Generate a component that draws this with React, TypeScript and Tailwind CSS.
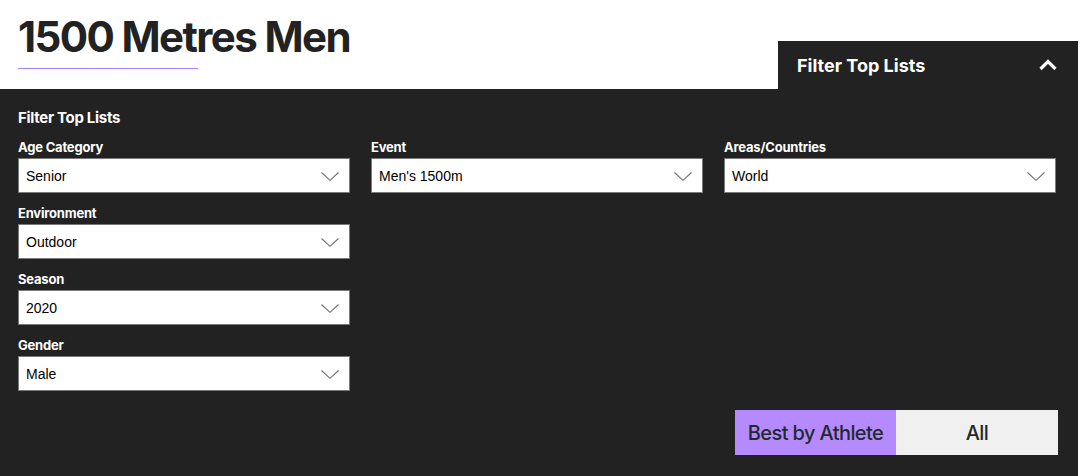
const leftFilters = [
  { label: "Age Category", value: "Senior" },
  { label: "Environment", value: "Outdoor" },
  { label: "Season", value: "2020" },
  { label: "Gender", value: "Male" },
];

function Chevron() {
  return (
    <svg width="18" height="9" viewBox="0 0 18 9" fill="none" className="shrink-0">
      <polyline points="0.5,0.5 9,8.3 17.5,0.5" stroke="#707070" strokeWidth="1.1" />
    </svg>
  );
}

function SelectField({ label, value }: { label: string; value: string }) {
  return (
    <div className="flex flex-col gap-[3px]">
      <span className="text-[13px] leading-[16px] font-bold text-white tracking-[-0.2px]">{label}</span>
      <div className="h-[35px] bg-white border border-[#7a7a7a] flex items-center justify-between pl-[7px] pr-[10px] pt-[2px]">
        <span className="font-['Liberation_Sans',Arial,sans-serif] text-[14px] text-black">{value}</span>
        <Chevron />
      </div>
    </div>
  );
}

export default function App() {
  return (
    <div className="w-[1082px] h-[476px] bg-white overflow-hidden font-['Inter',sans-serif]">
      <div className="w-[1078px]">
        <header className="h-[89px] flex justify-between items-start">
          <div className="pl-[18px] pt-[15px]">
            <h1 className="text-[42px] leading-[44px] font-bold text-[#222] tracking-[-1.6px]">
              1500 Metres Men
            </h1>
            <div className="mt-[9px] h-px w-[180px] bg-[#a97dff]" />
          </div>
          <button className="mt-[41px] w-[300px] h-[48px] bg-[#222222] flex items-center justify-between pl-[19px] pr-[21px]">
            <span className="text-[18px] font-bold text-white tracking-[0px]">Filter Top Lists</span>
            <svg width="18" height="12" viewBox="0 0 18 12" fill="none">
              <polyline points="1.5,10 9,2.5 16.5,10" stroke="white" strokeWidth="3.2" />
            </svg>
          </button>
        </header>
        <section className="h-[387px] bg-[#222222] pl-[18px] pr-[20px] pt-[19px]">
          <h2 className="text-[15px] leading-[20px] font-bold text-white tracking-[-0.3px]">Filter Top Lists</h2>
          <div className="mt-[11px] flex gap-[21px] items-start">
            <div className="w-[332px] flex flex-col gap-[12px]">
              {leftFilters.map((f) => (
                <SelectField key={f.label} label={f.label} value={f.value} />
              ))}
            </div>
            <div className="w-[332px]">
              <SelectField label="Event" value="Men's 1500m" />
            </div>
            <div className="w-[332px]">
              <SelectField label="Areas/Countries" value="World" />
            </div>
          </div>
          <div className="mt-[19px] flex justify-end">
            <button className="w-[161px] h-[45px] bg-[#b68aff] text-[20px] font-medium text-[#1f2a2a] tracking-[-0.6px]">
              Best by Athlete
            </button>
            <button className="w-[162px] h-[45px] bg-[#f0f0f0] text-[20px] font-medium text-[#1f2a2a] tracking-[-0.6px]">
              All
            </button>
          </div>
        </section>
      </div>
    </div>
  );
}
